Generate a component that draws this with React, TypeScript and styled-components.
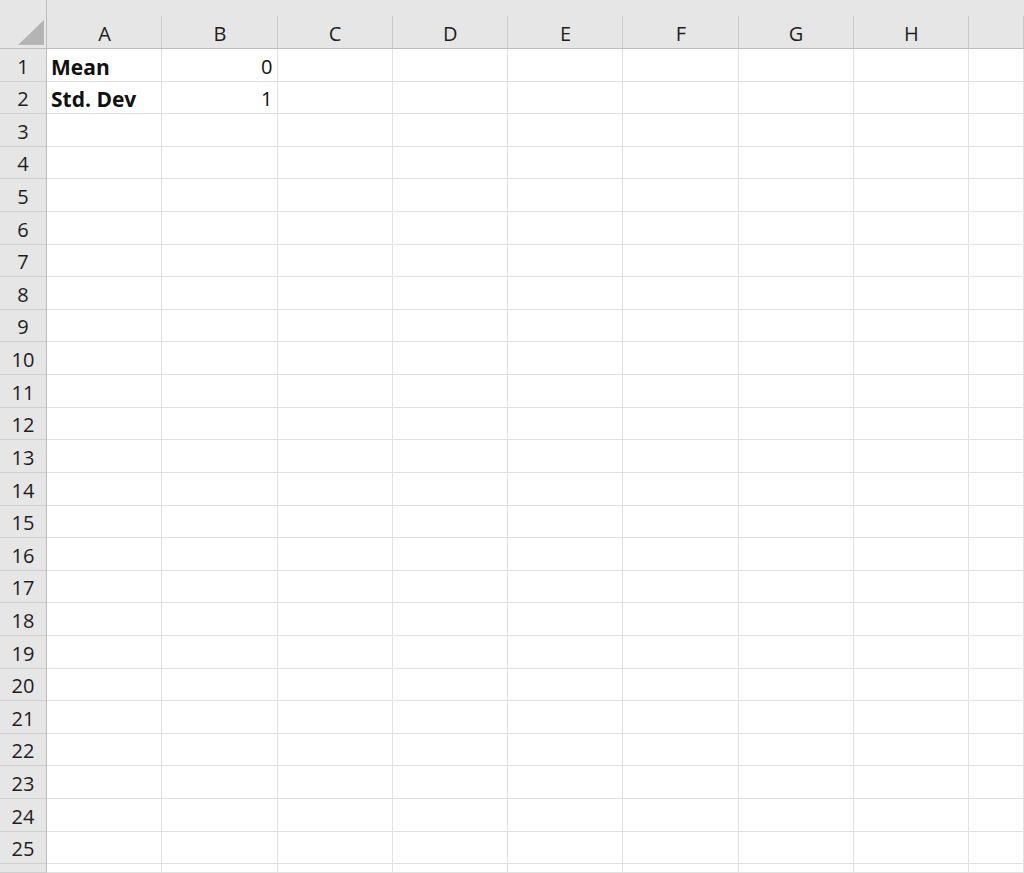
import React from 'react';
import styled, { createGlobalStyle } from 'styled-components';

const GlobalStyle = createGlobalStyle`
  html, body {
    margin: 0;
    padding: 0;
    background: #ffffff;
    overflow: hidden;
  }
  body {
    font-family: 'Open Sans', 'Noto Sans', 'Liberation Sans', sans-serif;
    color: #1a1a1a;
  }
`;

const COLUMNS = ['A', 'B', 'C', 'D', 'E', 'F', 'G', 'H', ''];
const ROW_COUNT = 26;

const data: Record<string, { text: string; bold?: boolean; numeric?: boolean }> = {
  A1: { text: 'Mean', bold: true },
  B1: { text: '0', numeric: true },
  A2: { text: 'Std. Dev', bold: true },
  B2: { text: '1', numeric: true },
};

const Sheet = styled.div`
  display: grid;
  grid-template-columns: 47px repeat(8, 115.25px) 1fr;
  grid-template-rows: 49px repeat(25, 32.62px) 1fr;
  width: 1024px;
  height: 873px;
  overflow: hidden;
`;

const Corner = styled.div`
  background: #e6e6e6;
  border-right: 1px solid #bdbdbd;
  border-bottom: 1px solid #bdbdbd;
  display: flex;
  align-items: flex-end;
  justify-content: flex-end;
  padding: 0 1px 3px 0;
`;

const ColumnHeader = styled.div`
  background:
    linear-gradient(#cbcbcb, #cbcbcb) right bottom / 1px 32px no-repeat,
    #e6e6e6;
  border-bottom: 1px solid #bdbdbd;
  display: flex;
  align-items: flex-end;
  justify-content: center;
  padding-bottom: 1px;
  font-size: 20px;
  line-height: 26px;
  color: #1e1e1e;
`;

const RowHeader = styled.div`
  background: #e6e6e6;
  border-right: 1px solid #bdbdbd;
  border-bottom: 1px solid #cfcfcf;
  display: flex;
  align-items: flex-end;
  justify-content: center;
  padding-bottom: 1px;
  font-size: 20px;
  line-height: 26px;
  color: #1e1e1e;
`;

const Cell = styled.div<{ $bold?: boolean; $numeric?: boolean }>`
  border-right: 1px solid #e1e1e1;
  border-bottom: 1px solid #e1e1e1;
  display: flex;
  align-items: flex-end;
  justify-content: ${(p) => (p.$numeric ? 'flex-end' : 'flex-start')};
  padding: 0 4px 1px 4px;
  font-size: ${(p) => (p.$bold ? '21px' : '20px')};
  line-height: 26px;
  font-weight: ${(p) => (p.$bold ? 700 : 400)};
  color: #111;
  white-space: nowrap;
  overflow: hidden;
`;

const SelectAll = () => (
  <svg width="27" height="25" viewBox="0 0 27 25">
    <polygon points="0,25 26,0 26,25" fill="#b4b4b4" />
  </svg>
);

const App: React.FC = () => {
  const rows = Array.from({ length: ROW_COUNT }, (_, i) => i + 1);
  return (
    <>
      <GlobalStyle />
      <Sheet>
        <Corner>
          <SelectAll />
        </Corner>
        {COLUMNS.map((c, i) => (
          <ColumnHeader key={`h${i}`}>{c}</ColumnHeader>
        ))}
        {rows.map((r) => (
          <React.Fragment key={r}>
            <RowHeader>{r <= 25 ? r : ''}</RowHeader>
            {COLUMNS.map((c, i) => {
              const cell = c ? data[`${c}${r}`] : undefined;
              return (
                <Cell key={`${r}-${i}`} $bold={cell?.bold} $numeric={cell?.numeric}>
                  {cell?.text}
                </Cell>
              );
            })}
          </React.Fragment>
        ))}
      </Sheet>
    </>
  );
};

export default App;
